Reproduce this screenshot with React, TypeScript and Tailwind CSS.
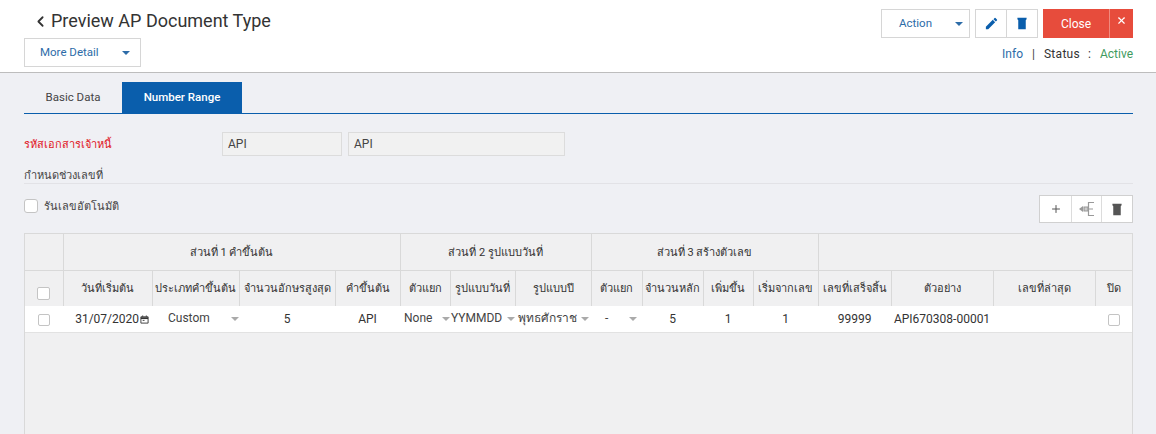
import { ChevronLeft, Plus, X } from "lucide-react";
import { MdEdit } from "react-icons/md";

const font = { fontFamily: 'Roboto, "Noto Sans", sans-serif' };

function Caret({ className }: { className: string }) {
  return <span className={`inline-block w-0 h-0 border-x-[4px] border-x-transparent border-t-[4px] ${className}`} />;
}

function Bin({ className }: { className: string }) {
  return (
    <svg viewBox="0 0 12 15" className={className} fill="currentColor">
      <path d="M0.5 0.5H11.5V2.5L10.5 3.5V14.5H1.5V3.5L0.5 2.5Z" />
    </svg>
  );
}

function Checkbox({ big }: { big?: boolean }) {
  return (
    <span className={`inline-block align-middle border border-[#c4c4c4] bg-white rounded-[2px] ${big ? "w-[13px] h-[13px]" : "w-[12px] h-[12px]"}`} />
  );
}

const groupTh = "border-r border-b border-[#d9d9d9] font-normal text-[11px] text-[#333] p-0 pt-[2px] h-[36px]";
const colTh = "border-r border-[#d9d9d9] font-normal text-[11px] text-[#333] p-0 pt-[2px] h-[36px] whitespace-nowrap";
const cell = "text-[12px] text-[#333] text-center p-0 pt-[1px] h-[26px]";

function SelectCell({ label, pad, arrow }: { label: string; pad: string; arrow: string }) {
  return (
    <td className="text-[12px] text-[#444] p-0 pt-[1px] h-[26px]">
      <div className={`flex items-center justify-between whitespace-nowrap ${pad}`}>
        <span className="-mt-[3px]">{label}</span>
        <Caret className={`border-t-[#aaa] ${arrow}`} />
      </div>
    </td>
  );
}

export default function App() {
  return (
    <div className="w-[1156px] h-[434px] overflow-hidden bg-[#eff0f4]" style={font}>
      <header className="h-[73px] bg-white border-b border-[#bdbdbd] pl-[24px] pr-[23px] flex justify-between">
        <div>
          <div className="flex items-center h-[38px] pl-[8px] pt-[5px]">
            <ChevronLeft size={17} strokeWidth={2.5} className="text-[#333]" />
            <h1 className="text-[18px] text-[#333] ml-[2px] leading-none -mt-[1px]">Preview AP Document Type</h1>
          </div>
          <button className="w-[117px] h-[29px] border border-[#d6d6d6] bg-white flex items-center text-[11.5px] text-[#2d6ca8] pl-[15px]">
            More Detail
            <Caret className="ml-[23px] border-t-[#2d6ca8]" />
          </button>
        </div>
        <div className="pt-[9px] flex flex-col items-end">
          <div className="flex">
            <button className="w-[89px] h-[29px] border border-[#d6d6d6] bg-white flex items-center text-[11.5px] text-[#2d6ca8] pl-[17px] pt-[1px]">
              Action
              <Caret className="ml-[23px] border-t-[#2d6ca8]" />
            </button>
            <div className="ml-[5px] flex h-[29px] border border-[#d6d6d6] bg-white">
              <span className="w-[31px] border-r border-[#d6d6d6] flex items-center justify-center">
                <MdEdit size={15} className="text-[#0a5eac]" />
              </span>
              <span className="w-[30px] flex items-center justify-center">
                <Bin className="w-[10px] h-[13px] text-[#0a5eac]" />
              </span>
            </div>
            <button className="ml-[5px] w-[67px] h-[29px] bg-[#e74c3c] text-white text-[12px] border-r border-[#f08a7e]">Close</button>
            <button className="w-[23px] h-[29px] bg-[#e74c3c] text-white flex justify-center pt-[6px]">
              <X size={11} strokeWidth={2.5} />
            </button>
          </div>
          <div className="mt-[7px] flex items-center text-[12px] leading-[18px]">
            <span className="text-[#2d6ca8]">Info</span>
            <span className="ml-[9px] text-[#444]">|</span>
            <span className="ml-[9px] text-[#333] tracking-[0.3px]">Status</span>
            <span className="ml-[8px] text-[#333]">:</span>
            <span className="ml-[9px] text-[#3f9b5e]">Active</span>
          </div>
        </div>
      </header>

      <main className="px-[23px] pl-[24px]">
        <div className="mt-[9px] flex h-[32px] border-b border-[#0a5eac]">
          <div className="w-[98px] flex items-center justify-center text-[11.5px] text-[#444]">Basic Data</div>
          <div className="w-[120px] bg-[#0a5eac] flex items-center justify-center text-[11.5px] font-medium text-white">Number Range</div>
        </div>

        <div className="mt-[18px] flex items-center h-[24px]">
          <label className="w-[198px] text-[11px] text-[#e0141e] pt-[2px]">รหัสเอกสารเจ้าหนี้</label>
          <div className="w-[120px] h-[24px] border border-[#dcdcdc] bg-[#f1f1f1] text-[12px] text-[#444] pl-[5px] flex items-center">API</div>
          <div className="ml-[6px] w-[217px] h-[24px] border border-[#dcdcdc] bg-[#f1f1f1] text-[12px] text-[#444] pl-[5px] flex items-center">API</div>
        </div>

        <div className="mt-[10px] h-[18px] border-b border-[#e2e2e6] text-[11px] font-medium text-[#444] leading-[19px]">กำหนดช่วงเลขที่</div>

        <div className="mt-[11px] flex justify-between h-[28px]">
          <div className="flex items-start pt-[4px]">
            <span className="w-[14px] h-[14px] rounded-[3px] border border-[#c4c4c4] bg-white" />
            <span className="ml-[6px] text-[11px] text-[#444] leading-[16px]">รันเลขอัตโนมัติ</span>
          </div>
          <div className="flex w-[94px] h-[28px] border border-[#d0d0d0] bg-white">
            <span className="w-[32px] border-r border-[#dcdcdc] flex items-center justify-center">
              <Plus size={12} className="text-[#555]" />
            </span>
            <span className="w-[30px] border-r border-[#dcdcdc] flex items-center justify-center">
              <svg viewBox="0 0 16 14" className="w-[16px] h-[14px] text-[#999]" fill="none" stroke="currentColor" strokeWidth="1.2">
                <path d="M15 0.5H9.5V13.5H15M9.5 7H14" />
                <path d="M5 5H9V9H5Z" fill="#ccc" />
                <path d="M0 7L4 4V10Z" fill="currentColor" stroke="none" />
              </svg>
            </span>
            <span className="flex-1 flex items-center justify-center">
              <Bin className="w-[10px] h-[13px] text-[#555]" />
            </span>
          </div>
        </div>

        <div className="mt-[10px] h-[300px] bg-[#f0f0f1] border border-[#d9d9d9]">
          <table className="table-fixed border-collapse w-[1107px]">
            <colgroup>
              {[38, 89, 87, 96, 65, 50, 65, 76, 51, 61, 50, 65, 73, 102, 102, 37].map((w, i) => (
                <col key={i} style={{ width: w }} />
              ))}
            </colgroup>
            <thead>
              <tr>
                <th className={groupTh}></th>
                <th colSpan={4} className={groupTh}>ส่วนที่ 1 คำขึ้นต้น</th>
                <th colSpan={3} className={groupTh}>ส่วนที่ 2 รูปแบบวันที่</th>
                <th colSpan={4} className={groupTh}>ส่วนที่ 3 สร้างตัวเลข</th>
                <th colSpan={4} className="border-b border-[#d9d9d9] p-0 h-[36px]"></th>
              </tr>
              <tr>
                <th className={`${colTh} align-bottom pb-[4px]`}><Checkbox big /></th>
                <th className={colTh}>วันที่เริ่มต้น</th>
                <th className={colTh}>ประเภทคำขึ้นต้น</th>
                <th className={colTh}>จำนวนอักษรสูงสุด</th>
                <th className={colTh}>คำขึ้นต้น</th>
                <th className={colTh}>ตัวแยก</th>
                <th className={colTh}>รูปแบบวันที่</th>
                <th className={colTh}>รูปแบบปี</th>
                <th className={colTh}>ตัวแยก</th>
                <th className={colTh}>จำนวนหลัก</th>
                <th className={colTh}>เพิ่มขึ้น</th>
                <th className={colTh}>เริ่มจากเลข</th>
                <th className={colTh}>เลขที่เสร็จสิ้น</th>
                <th className={colTh}>ตัวอย่าง</th>
                <th className={colTh}>เลขที่ล่าสุด</th>
                <th className="font-normal text-[11px] text-[#333] p-0 pt-[2px] h-[36px]">ปิด</th>
              </tr>
            </thead>
            <tbody>
              <tr className="bg-white border-b border-[#e2e2e2]">
                <td className={cell}><Checkbox /></td>
                <td className={cell}>
                  <div className="flex items-center justify-end pr-[3px]">
                    <span className="mr-[1px]">31/07/2020</span>
                    <svg viewBox="0 0 10 10" className="w-[9px] h-[9px] text-[#333]" fill="none" stroke="currentColor">
                      <path d="M1 2H9V9H1Z" />
                      <path d="M1 3.5H9" strokeWidth="2" />
                      <path d="M3 0.5V2M7 0.5V2M3 6H5" />
                    </svg>
                  </div>
                </td>
                <SelectCell label="Custom" pad="pl-[16px]" arrow="mr-[0px]" />
                <td className={cell}>5</td>
                <td className={cell}>API</td>
                <SelectCell label="None" pad="pl-[4px]" arrow="mr-[0px]" />
                <SelectCell label="YYMMDD" pad="pl-[1px]" arrow="mr-[0px]" />
                <SelectCell label="พุทธศักราช" pad="pl-[3px]" arrow="mr-[2px]" />
                <SelectCell label="-" pad="pl-[14px]" arrow="mr-[5px]" />
                <td className={cell}>5</td>
                <td className={cell}>1</td>
                <td className={cell}>1</td>
                <td className={cell}>99999</td>
                <td className={cell}>API670308-00001</td>
                <td className={cell}></td>
                <td className={cell}><Checkbox /></td>
              </tr>
            </tbody>
          </table>
        </div>
      </main>
    </div>
  );
}
